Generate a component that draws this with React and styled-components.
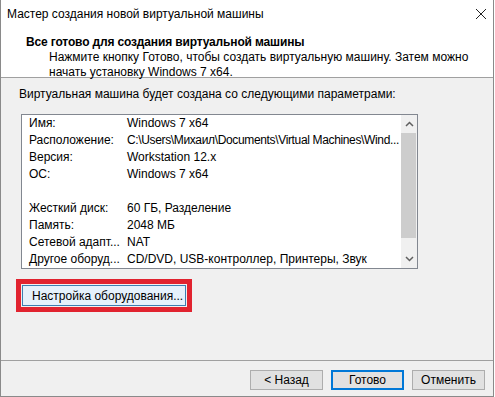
import React from 'react';
import styled, { createGlobalStyle } from 'styled-components';

const GlobalStyle = createGlobalStyle`
  html, body {
    margin: 0;
    padding: 0;
    background: #ffffff;
  }
  body {
    font-family: "Liberation Sans", "Noto Sans", sans-serif;
    font-size: 12px;
    color: #000;
  }
`;

const Window = styled.div`
  width: 494px;
  height: 397px;
  box-sizing: border-box;
  border: 1px solid #8a8a8a;
  border-top: none;
  display: flex;
  flex-direction: column;
  background: #f0f0f0;
`;

const TitleBar = styled.div`
  height: 27px;
  display: flex;
  align-items: center;
  justify-content: space-between;
  padding: 0 6px 0 6px;
  background: #fff;
`;

const Title = styled.span`
  line-height: 16px;
`;

const Header = styled.div`
  background: #fff;
  padding: 7px 0 0 25px;
  height: 43px;
  border-bottom: 1px solid #a0a0a0;
  white-space: nowrap;
`;

const HeaderTitle = styled.div`
  font-weight: bold;
  letter-spacing: -0.15px;
  line-height: 16px;
`;

const HeaderText = styled.div`
  padding-left: 23px;
  line-height: 15px;
`;

const Body = styled.div`
  flex: 1;
  padding: 8px 0 0 18px;
  display: flex;
  flex-direction: column;
`;

const Intro = styled.div`
  line-height: 16px;
  margin-bottom: 12px;
`;

const ListBox = styled.div`
  width: 397px;
  height: 155px;
  box-sizing: border-box;
  border: 1px solid #828790;
  background: #fff;
  display: flex;
  margin-left: 2px;
`;

const Rows = styled.div`
  flex: 1;
  min-width: 0;
  padding: 0 0 0 7px;
  overflow: hidden;
`;

const Row = styled.div`
  height: 17px;
  line-height: 17px;
  display: flex;
  white-space: nowrap;
`;

const Label = styled.span`
  width: 98px;
  flex-shrink: 0;
`;

const Value = styled.span`
  letter-spacing: ${p => (p.$tight ? '-0.35px' : 'normal')};
`;

const Scrollbar = styled.div`
  width: 16px;
  background: #f0f0f0;
  display: flex;
  flex-direction: column;
`;

const Arrow = styled.div`
  height: 18px;
  display: flex;
  align-items: center;
  justify-content: center;
`;

const Track = styled.div`
  flex: 1;
  padding: 0 1px 0 0;
  display: flex;
  flex-direction: column;
`;

const Thumb = styled.div`
  height: 105px;
  background: #cdcdcd;
`;

const Highlight = styled.div`
  align-self: flex-start;
  margin: 10px 0 0 -3px;
  border: 5px solid #e1232f;
  padding: 1px;
`;

const Button = styled.div`
  box-sizing: border-box;
  height: ${p => p.$h || 21}px;
  width: ${p => p.$w}px;
  display: flex;
  align-items: center;
  white-space: nowrap;
  justify-content: ${p => (p.$left ? 'flex-start' : 'center')};
  padding-left: ${p => (p.$left ? '9px' : '0')};
  background: ${p => (p.$hover ? '#e5f1fb' : '#e1e1e1')};
  border: ${p => (p.$default ? '2px solid #0078d7' : p.$hover ? '1px solid #3c7fb1' : '1px solid #adadad')};
  line-height: 16px;
`;

const Footer = styled.div`
  border-top: 1px solid #a0a0a0;
  height: 36px;
  display: flex;
  justify-content: flex-end;
  align-items: flex-start;
  gap: 8px;
  padding: 9px 8px 0 0;
  box-sizing: border-box;
`;

const rows = [
  ['Имя:', 'Windows 7 x64'],
  ['Расположение:', 'C:\\Users\\Михаил\\Documents\\Virtual Machines\\Wind...', true],
  ['Версия:', 'Workstation 12.x'],
  ['ОС:', 'Windows 7 x64'],
  ['', ''],
  ['Жесткий диск:', '60 ГБ, Разделение'],
  ['Память:', '2048 МБ'],
  ['Сетевой адапт...', 'NAT'],
  ['Другое оборуд...', 'CD/DVD, USB-контроллер, Принтеры, Звук'],
];

function App() {
  return (
    <>
      <GlobalStyle />
      <Window>
        <TitleBar>
          <Title>Мастер создания новой виртуальной машины</Title>
          <svg width="12" height="12" viewBox="0 0 12 12">
            <path d="M1 1 L11 11 M11 1 L1 11" stroke="#222" strokeWidth="1" />
          </svg>
        </TitleBar>
        <Header>
          <HeaderTitle>Все готово для создания виртуальной машины</HeaderTitle>
          <HeaderText>
            Нажмите кнопку Готово, чтобы создать виртуальную машину. Затем можно
            <br />
            начать установку Windows 7 x64.
          </HeaderText>
        </Header>
        <Body>
          <Intro>Виртуальная машина будет создана со следующими параметрами:</Intro>
          <ListBox>
            <Rows>
              {rows.map((r, i) => (
                <Row key={i}>
                  <Label>{r[0]}</Label>
                  <Value $tight={r[2]}>{r[1]}</Value>
                </Row>
              ))}
            </Rows>
            <Scrollbar>
              <Arrow>
                <svg width="9" height="6" viewBox="0 0 9 6">
                  <path d="M1 5 L4.5 1.5 L8 5" stroke="#606060" strokeWidth="1.5" fill="none" />
                </svg>
              </Arrow>
              <Track>
                <Thumb />
              </Track>
              <Arrow>
                <svg width="9" height="6" viewBox="0 0 9 6">
                  <path d="M1 1 L4.5 4.5 L8 1" stroke="#606060" strokeWidth="1.5" fill="none" />
                </svg>
              </Arrow>
            </Scrollbar>
          </ListBox>
          <Highlight>
            <Button $w={164} $left $hover>Настройка оборудования...</Button>
          </Highlight>
        </Body>
        <Footer>
          <Button $w={73} $h={20}>&lt; Назад</Button>
          <Button $w={73} $h={20} $default>Готово</Button>
          <Button $w={73} $h={20}>Отменить</Button>
        </Footer>
      </Window>
    </>
  );
}

export default App;
